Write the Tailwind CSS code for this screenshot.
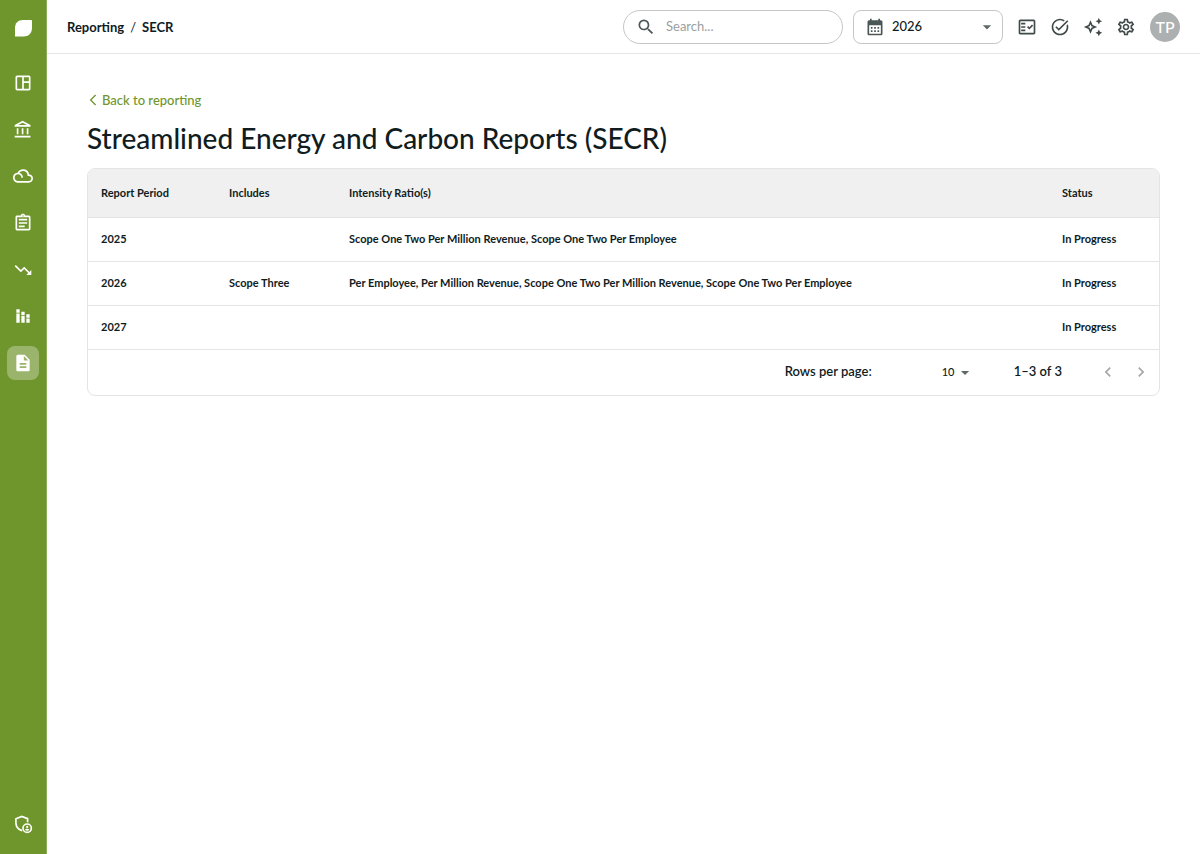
<!DOCTYPE html>
<html lang="en">
<head>
    <meta charset="UTF-8">
    <meta name="viewport" content="width=device-width, initial-scale=1.0">
    <title>Streamlined Energy and Carbon Reports (SECR)</title>
    <script src="https://cdn.jsdelivr.net/npm/@tailwindcss/browser@4"></script>
</head>
<body class="bg-white text-[#101c1e] font-['Lato','Noto_Sans',sans-serif] font-medium">
    <div class="flex min-h-screen">
        <!-- Sidebar -->
        <aside class="w-[47px] shrink-0 bg-[#6f962c] border-r border-[#8dac58] text-white flex flex-col items-center pt-5 pb-5">
            <a href="#" aria-label="Home" class="block">
                <svg class="w-[17px] h-[17px]" viewBox="0 0 17 17" fill="currentColor"><path d="M0 16.5V8C0 3 3 0 8 0h8.2c.5 0 .8.3.8.8V8c0 5-3.500 8.500-8.500 8.500z"/></svg>
            </a>
            <nav class="mt-[29px] h-[314px] flex flex-col justify-between">
                <a href="#" aria-label="Dashboard" class="w-8 h-[34px] rounded-lg flex items-center justify-center">
                    <svg class="w-5 h-5" viewBox="0 0 24 24" fill="currentColor"><path d="M19 3H5c-1.1 0-2 .9-2 2v14c0 1.1.9 2 2 2h14c1.1 0 2-.9 2-2V5c0-1.100-.9-2-2-2zM5 19V5h6v14H5zm14 0h-6v-7h6v7zm0-9h-6V5h6v5z"/></svg>
                </a>
                <a href="#" aria-label="Organisation" class="w-8 h-[34px] rounded-lg flex items-center justify-center">
                    <svg class="w-5 h-5" viewBox="0 0 24 24" fill="currentColor"><path d="M6.500 10h-2v7h2v-7zm6 0h-2v7h2v-7zm8.500 9H2v2h19v-2zm-2.500-9h-2v7h2v-7zm-7-6.740L16.710 6H6.290l5.210-2.740m0-2.260L2 6v2h19V6l-9.500-5z"/></svg>
                </a>
                <a href="#" aria-label="Emissions" class="w-8 h-[34px] rounded-lg flex items-center justify-center">
                    <svg class="w-5 h-5" viewBox="0 0 24 24" fill="currentColor"><path d="M19.350 10.040A7.490 7.490 0 0 0 12 4C9.110 4 6.610 5.640 5.360 8.040A5.994 5.994 0 0 0 0 14c0 3.310 2.690 6 6 6h13c2.760 0 5-2.240 5-5 0-2.640-2.050-4.780-4.650-4.960zM19 18H6c-2.210 0-4-1.790-4-4s1.790-4 4-4 4 1.790 4 4h2c0-2.760-1.860-5.080-4.400-5.780C8.610 6.880 10.200 6 12 6c3.030 0 5.500 2.470 5.500 5.500v.5H19c1.650 0 3 1.350 3 3s-1.350 3-3 3z"/></svg>
                </a>
                <a href="#" aria-label="Surveys" class="w-8 h-[34px] rounded-lg flex items-center justify-center">
                    <svg class="w-5 h-5" viewBox="0 0 24 24" fill="currentColor"><path d="M7 15h7v2H7zm0-4h10v2H7zm0-4h10v2H7zm12-4h-4.180C14.400 1.840 13.300 1 12 1c-1.300 0-2.400.84-2.820 2H5c-.14 0-.27.01-.4.04a2.008 2.008 0 0 0-1.440 1.190c-.1.23-.16.49-.16.77v14c0 .27.06.54.16.78s.25.45.43.64c.27.27.62.47 1.010.55.13.02.26.03.4.03h14c1.100 0 2-.9 2-2V5c0-1.100-.9-2-2-2zm-7-.25c.41 0 .75.34.75.75s-.34.75-.75.75-.75-.34-.75-.75.34-.75.75-.75zM19 19H5V5h14v14z"/></svg>
                </a>
                <a href="#" aria-label="Reductions" class="w-8 h-[34px] rounded-lg flex items-center justify-center">
                    <svg class="w-5 h-5" viewBox="0 0 24 24" fill="currentColor"><path d="m16 18 2.290-2.290-4.880-4.880-4 4L2 7.410 3.410 6l6 6 4-4 6.300 6.290L22 12v6z"/></svg>
                </a>
                <a href="#" aria-label="Analytics" class="w-8 h-[34px] rounded-lg flex items-center justify-center">
                    <svg class="w-5 h-5" viewBox="0 0 24 24" fill="currentColor"><path d="M4 9h4v11H4zm0-5h4v4H4zm6 3h4v4h-4zm6 3h4v4h-4zm0 5h4v5h-4zm-6-3h4v8h-4z"/></svg>
                </a>
                <a href="#" aria-label="Reporting" aria-current="page" class="w-8 h-[34px] rounded-lg bg-white/30 flex items-center justify-center">
                    <svg class="w-5 h-5" viewBox="0 0 24 24" fill="currentColor"><path d="M14 2H6c-1.100 0-1.990.9-1.990 2L4 20c0 1.100.89 2 1.990 2H18c1.100 0 2-.9 2-2V8l-6-6zm2 16H8v-2h8v2zm0-4H8v-2h8v2zm-3-5V3.500L18.500 9H13z"/></svg>
                </a>
            </nav>
            <a href="#" aria-label="Admin" class="mt-auto">
                <svg class="w-5 h-5" viewBox="0 0 24 24" fill="none" stroke="currentColor" stroke-width="2">
                    <path d="M17.500 10V5.600L10.500 3 3.500 5.700v4.800c0 4.500 3 8.300 7.500 9.500"/>
                    <circle cx="17" cy="17" r="5"/>
                    <circle cx="17" cy="15.500" r="1.300" fill="currentColor" stroke="none"/>
                    <path d="M14.400 18.600c.4-1.200 4.800-1.200 5.200 0-.6 1-1.600 1.500-2.600 1.500s-2-.5-2.600-1.500z" fill="currentColor" stroke="none"/>
                </svg>
            </a>
        </aside>

        <div class="flex-1 min-w-0">
            <!-- Top bar -->
            <header class="h-[54px] border-b border-[#e6e6e6] px-5 flex items-center justify-between">
                <nav aria-label="Breadcrumb" class="flex items-center gap-[6px] text-[13px] leading-5 font-bold">
                    <a href="#">Reporting</a>
                    <span class="font-normal">/</span>
                    <span>SECR</span>
                </nav>
                <div class="flex items-center">
                    <label class="w-[220px] h-[34px] border border-[#c4c7c7] rounded-full flex items-center pl-3 pr-4">
                        <svg class="w-5 h-5 shrink-0 text-[#4b5756]" viewBox="0 0 24 24" fill="currentColor"><path d="M15.500 14h-.79l-.28-.27A6.471 6.471 0 0 0 16 9.500 6.500 6.500 0 1 0 9.500 16c1.610 0 3.090-.59 4.230-1.570l.27.28v.79l5 4.990L20.490 19l-4.990-5zm-6 0C7.010 14 5 11.990 5 9.500S7.010 5 9.500 5 14 7.010 14 9.500 11.990 14 9.500 14z"/></svg>
                        <input type="search" aria-label="Search" placeholder="Search..." class="ml-[10px] w-full min-w-0 text-[13px] font-normal outline-none placeholder:text-[#9a9f9f]">
                    </label>
                    <div class="relative ml-[10px]">
                        <svg class="absolute left-3 top-[7px] w-5 h-5 text-[#4b5756] pointer-events-none" viewBox="0 0 24 24" fill="currentColor"><path d="M19 4h-1V2h-2v2H8V2H6v2H5c-1.110 0-1.990.9-1.990 2L3 20c0 1.100.89 2 2 2h14c1.100 0 2-.9 2-2V6c0-1.100-.9-2-2-2zm0 16H5V10h14v10zM9 14H7v-2h2v2zm4 0h-2v-2h2v2zm4 0h-2v-2h2v2zm-8 4H7v-2h2v2zm4 0h-2v-2h2v2zm4 0h-2v-2h2v2z"/></svg>
                        <select aria-label="Year" class="block appearance-none w-[150px] h-[34px] border border-[#c4c7c7] rounded-lg pl-[38px] text-[13px]">
                            <option>2026</option>
                        </select>
                        <svg class="absolute right-[6px] top-[7px] w-5 h-5 text-[#5f6969] pointer-events-none" viewBox="0 0 24 24" fill="currentColor"><path d="m7 10 5 5 5-5z"/></svg>
                    </div>
                    <div class="flex items-center gap-[13px] mx-[14px] text-[#3f4a49]">
                        <button aria-label="Checklist">
                            <svg class="w-5 h-5" viewBox="0 0 24 24" fill="currentColor"><path d="M20 3H4c-1.100 0-2 .9-2 2v14c0 1.100.9 2 2 2h16c1.100 0 2-.9 2-2V5c0-1.100-.9-2-2-2zm0 16H4V5h16v14z"/><path d="M19.410 10.420 17.990 9l-3.170 3.170-1.410-1.420L12 12.160 14.820 15zM5 7h5v2H5zM5 11h5v2H5zM5 15h5v2H5z"/></svg>
                        </button>
                        <button aria-label="Tasks">
                            <svg class="w-5 h-5" viewBox="0 0 24 24" fill="currentColor"><path d="M22 5.180 10.590 16.600l-4.240-4.240 1.410-1.410 2.830 2.830 10-10L22 5.180zm-2.210 5.040c.13.57.21 1.170.21 1.780 0 4.420-3.580 8-8 8s-8-3.580-8-8 3.580-8 8-8c1.580 0 3.040.46 4.280 1.250l1.440-1.440A9.900 9.900 0 0 0 12 2C6.480 2 2 6.480 2 12s4.480 10 10 10 10-4.480 10-10c0-1.190-.22-2.330-.6-3.390l-1.610 1.610z"/></svg>
                        </button>
                        <button aria-label="Assistant">
                            <svg class="w-5 h-5" viewBox="0 0 24 24" fill="currentColor"><path d="m19 9 1.250-2.750L23 5l-2.750-1.250L19 1l-1.250 2.750L15 5l2.750 1.250zM19 15l-1.250 2.750L15 19l2.750 1.250L19 23l1.250-2.750L23 19l-2.750-1.250zM11.500 9.500 9 4 6.500 9.500 1 12l5.500 2.500L9 20l2.500-5.500L17 12l-5.500-2.500zm-1.510 3.490L9 15.170l-.99-2.180L5.830 12l2.180-.99L9 8.830l.99 2.180 2.180.99-2.180.99z"/></svg>
                        </button>
                        <button aria-label="Settings">
                            <svg class="w-5 h-5" viewBox="0 0 24 24" fill="currentColor"><path d="M19.430 12.980c.04-.32.07-.64.07-.98 0-.34-.03-.66-.07-.98l2.110-1.650c.19-.15.24-.42.12-.64l-2-3.460a.5.5 0 0 0-.61-.22l-2.490 1c-.52-.4-1.080-.73-1.690-.98l-.38-2.650A.488.488 0 0 0 14 2h-4c-.25 0-.46.18-.49.42l-.38 2.650c-.61.25-1.170.59-1.690.98l-2.490-1a.566.566 0 0 0-.18-.03c-.17 0-.34.09-.43.25l-2 3.460c-.13.22-.07.49.12.64l2.110 1.650c-.04.32-.07.65-.07.98 0 .33.03.66.07.98l-2.110 1.650c-.19.15-.24.42-.12.64l2 3.460a.5.5 0 0 0 .61.22l2.490-1c.52.4 1.080.73 1.690.98l.38 2.650c.03.24.24.42.49.42h4c.25 0 .46-.18.49-.42l.38-2.650c.61-.25 1.170-.59 1.690-.98l2.490 1c.06.02.12.03.18.03.17 0 .34-.09.43-.25l2-3.460c.12-.22.07-.49-.12-.64l-2.110-1.650zm-1.980-1.710c.04.31.05.52.05.73 0 .21-.02.43-.05.73l-.14 1.130.89.7 1.080.84-.7 1.210-1.270-.51-1.040-.42-.9.68c-.43.32-.84.56-1.250.73l-1.060.43-.16 1.130-.2 1.350h-1.400l-.19-1.350-.16-1.130-1.060-.43c-.43-.18-.83-.41-1.230-.71l-.91-.7-1.060.43-1.270.51-.7-1.210 1.080-.84.89-.7-.14-1.130c-.03-.31-.05-.54-.05-.74s.02-.43.05-.73l.14-1.130-.89-.7-1.080-.84.7-1.210 1.270.51 1.040.42.9-.68c.43-.32.84-.56 1.250-.73l1.060-.43.16-1.130.2-1.350h1.390l.19 1.350.16 1.130 1.060.43c.43.18.83.41 1.230.71l.91.7 1.060-.43 1.270-.51.7 1.210-1.070.85-.89.7.14 1.130zM12 8c-2.210 0-4 1.790-4 4s1.790 4 4 4 4-1.790 4-4-1.790-4-4-4zm0 6c-1.100 0-2-.9-2-2s.9-2 2-2 2 .9 2 2-.9 2-2 2z"/></svg>
                        </button>
                    </div>
                    <button aria-label="Account" class="w-[30px] h-[30px] rounded-full bg-[#adb0b0] text-white text-base">TP</button>
                </div>
            </header>

            <!-- Main Content -->
            <main class="px-10 pt-9">
                <a href="#" class="inline-flex items-center text-[13px] leading-5 text-[#6f962c]">
                    <svg class="w-[15px] h-4" viewBox="4 4 16 16" fill="currentColor"><path d="m13.700 7.200-1-1L6.900 12l5.800 5.800 1-1L8.900 12z"/></svg>
                    Back to reporting
                </a>
                <h1 class="mt-[6px] mb-3 text-[28px] leading-9">Streamlined Energy and Carbon Reports (SECR)</h1>

                <div class="border border-[#e4e4e4] rounded-lg overflow-hidden">
                    <table class="w-full table-fixed text-left text-[11px] font-bold">
                        <thead class="bg-[#f0f0f0]">
                            <tr class="h-12 border-b border-[#e4e4e4]">
                                <th class="w-[128px] px-[13px]">Report Period</th>
                                <th class="w-[120px] px-[13px]">Includes</th>
                                <th class="px-[13px]">Intensity Ratio(s)</th>
                                <th class="w-[110px] px-[13px]">Status</th>
                            </tr>
                        </thead>
                        <tbody>
                            <tr class="h-11 border-b border-[#e4e4e4]">
                                <td class="px-[13px]">2025</td>
                                <td class="px-[13px]"></td>
                                <td class="px-[13px]">Scope One Two Per Million Revenue, Scope One Two Per Employee</td>
                                <td class="px-[13px]">In Progress</td>
                            </tr>
                            <tr class="h-11 border-b border-[#e4e4e4]">
                                <td class="px-[13px]">2026</td>
                                <td class="px-[13px]">Scope Three</td>
                                <td class="px-[13px]">Per Employee, Per Million Revenue, Scope One Two Per Million Revenue, Scope One Two Per Employee</td>
                                <td class="px-[13px]">In Progress</td>
                            </tr>
                            <tr class="h-11 border-b border-[#e4e4e4]">
                                <td class="px-[13px]">2027</td>
                                <td class="px-[13px]"></td>
                                <td class="px-[13px]"></td>
                                <td class="px-[13px]">In Progress</td>
                            </tr>
                        </tbody>
                    </table>
                    <!-- Pagination -->
                    <div class="h-[45px] flex items-center justify-end pr-2 text-[13px] font-semibold">
                        <label for="rows">Rows per page:</label>
                        <div class="relative ml-[70px]">
                            <select id="rows" class="block appearance-none w-8 text-[11px] font-medium">
                                <option>10</option>
                            </select>
                            <svg class="absolute left-[13px] top-0 w-5 h-full text-[#5f6969] pointer-events-none" viewBox="0 0 24 24" fill="currentColor"><path d="m6 10 6 6 6-6z"/></svg>
                        </div>
                        <span class="ml-10">1–3 of 3</span>
                        <button aria-label="Previous page" disabled class="ml-9 text-[#a5a8a8]">
                            <svg class="w-5 h-5" viewBox="0 0 24 24" fill="currentColor"><path d="M15.410 7.410 14 6l-6 6 6 6 1.410-1.410L10.830 12z"/></svg>
                        </button>
                        <button aria-label="Next page" disabled class="ml-[13px] text-[#a5a8a8]">
                            <svg class="w-5 h-5" viewBox="0 0 24 24" fill="currentColor"><path d="M10 6 8.590 7.410 13.170 12l-4.580 4.590L10 18l6-6z"/></svg>
                        </button>
                    </div>
                </div>
            </main>
        </div>
    </div>
</body>
</html>
